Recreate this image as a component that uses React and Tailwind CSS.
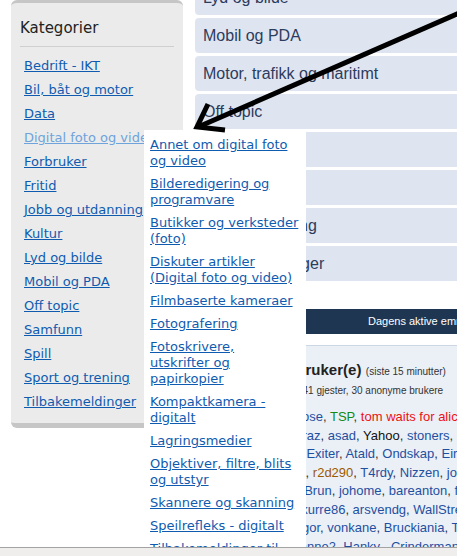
import React from "react";

const categories = [
  "Bedrift - IKT",
  "Bil, båt og motor",
  "Data",
  "Digital foto og video",
  "Forbruker",
  "Fritid",
  "Jobb og utdanning",
  "Kultur",
  "Lyd og bilde",
  "Mobil og PDA",
  "Off topic",
  "Samfunn",
  "Spill",
  "Sport og trening",
  "Tilbakemeldinger",
];

// linjeskift som i originalen
const subCategories = [
  ["Annet om digital foto", "og video"],
  ["Bilderedigering og", "programvare"],
  ["Butikker og verksteder", "(foto)"],
  ["Diskuter artikler", "(Digital foto og video)"],
  ["Filmbaserte kameraer"],
  ["Fotografering"],
  ["Fotoskrivere,", "utskrifter og", "papirkopier"],
  ["Kompaktkamera -", "digitalt"],
  ["Lagringsmedier"],
  ["Objektiver, filtre, blits", "og utstyr"],
  ["Skannere og skanning"],
  ["Speilrefleks - digitalt"],
  ["Tilbakemeldinger til", "Digital foto og video"],
];

const forums = [
  "Lyd og bilde",
  "Mobil og PDA",
  "Motor, trafikk og maritimt",
  "Off topic",
  "Samfunn",
  "Spill",
  "Sport og trening",
  "Tilbakemeldinger",
];

// b = blå, g = grønn, r = rød, k = svart, o = brun
const userLines = [
  [["Espen", "b"], ["Harald", "b"], ["Rose", "b"], ["TSP", "g"], ["tom waits for alice", "r"]],
  [["Morten", "b"], ["Olav", "b"], ["Shiraz", "b"], ["asad", "b"], ["Yahoo", "k"], ["stoners", "b"], ["Bob", "b"]],
  [["Lasse", "b"], ["Bentsens", "b"], ["Exiter", "b"], ["Atald", "b"], ["Ondskap", "b"], ["Eirik", "b"]],
  [["Kjetil", "b"], ["Strømsman", "b"], ["r2d290", "o"], ["T4rdy", "b"], ["Nizzen", "b"], ["jonas", "b"]],
  [["Toren", "b"], ["Geir", "b"], ["Knut Brun", "b"], ["johome", "b"], ["bareanton", "b"], ["frode", "b"]],
  [["Henrik", "b"], ["Bjarne", "b"], ["Skurre86", "b"], ["arsvendg", "b"], ["WallStreet", "b"]],
  [["Stian", "b"], ["Trond", "b"], ["Gregor", "b"], ["vonkane", "b"], ["Bruckiania", "b"], ["Tom", "b"]],
  [["Espen", "b"], ["Arnold", "b"], ["Sanne2", "b"], ["Hanky ", "b"], ["Crinderman", "b"]],
];

const userColors = {
  b: "text-[#1f4fa0]",
  g: "text-[#138a13]",
  r: "text-[#ee1111]",
  k: "text-[#111111]",
  o: "text-[#9a5a00]",
};

const App = () => {
  return (
    <div className="relative w-[457px] h-[556px] overflow-hidden bg-white">
      <div className="flex items-start">
        {/* Kategorier */}
        <div className="ml-[11px] w-[172px] shrink-0 rounded-md border-t-[3px] border-b-[5px] border-[#c6c6c6] bg-[#ebebeb] px-[9px] pt-[15px] pb-[9px] font-['DejaVu_Sans',Verdana,sans-serif]">
          <h2 className="text-[15px] leading-[20px] text-[#222]">Kategorier</h2>
          <hr className="mt-[8px] border-t border-[#cfcfcf]" />
          <ul className="mt-[7px] pl-1">
            {categories.map((cat) => (
              <li key={cat} className="text-[13px] leading-[24px] whitespace-nowrap">
                <a
                  href="#"
                  className={
                    cat === "Digital foto og video"
                      ? "underline text-[#6ea3dc]"
                      : "underline text-[#0f5bb0]"
                  }
                >
                  {cat}
                </a>
              </li>
            ))}
          </ul>
        </div>

        {/* Forum-liste */}
        <div className="ml-[12px] w-[300px] shrink-0 -mt-[20px] font-['Liberation_Sans',Arial,sans-serif]">
          <div className="flex flex-col gap-[3px]">
            {forums.map((f) => (
              <div
                key={f}
                className="h-[35px] rounded-[4px] bg-[#dfe5f0] pl-2 flex items-center text-[16px] text-[#2c3c5e]"
              >
                {f}
              </div>
            ))}
          </div>

          <div className="mt-[28px] h-[25px] bg-[#1e3651] flex items-center pl-[173px] text-[11px] text-white whitespace-nowrap">
            Dagens aktive emner
          </div>

          <div className="mt-[11px] border-t border-[#cdd6e3] bg-[#ebf0f7] px-2 pt-[14px] pb-4 whitespace-nowrap">
            <div className="leading-[20px] text-[#222]">
              <span className="text-[15px] font-bold">Pålogget: 71 bruker(e)</span>{" "}
              <span className="text-[10px] text-[#333]">(siste 15 minutter)</span>
            </div>
            <div className="text-[10px] leading-[18px] text-[#333]">
              Totalt: 200 registrerte, 41 gjester, 30 anonyme brukere
            </div>
            <div className="mt-[8px] text-[13px] leading-[18.5px]">
              {userLines.map((line, i) => (
                <div key={i}>
                  {line.map(([name, c], j) => (
                    <span key={j}>
                      <span className={userColors[c]}>{name}</span>
                      <span className="text-[#333]">{", "}</span>
                    </span>
                  ))}
                </div>
              ))}
            </div>
          </div>
        </div>
      </div>

      {/* Undermeny */}
      <div className="absolute left-[144px] top-[130px] w-[162px] h-[440px] bg-white px-[6px] pt-[7px] font-['DejaVu_Sans',Verdana,sans-serif]">
        <ul className="flex flex-col gap-[7px]">
          {subCategories.map((lines) => (
            <li key={lines.join(" ")} className="text-[13px] leading-[16px] whitespace-nowrap">
              <a href="#" className="underline text-[#0f5bb0]">
                {lines.map((l, i) => (
                  <React.Fragment key={i}>
                    {i > 0 && <br />}
                    {l}
                  </React.Fragment>
                ))}
              </a>
            </li>
          ))}
        </ul>
      </div>

      {/* Pil */}
      <svg
        className="absolute left-0 top-0 pointer-events-none"
        width="457"
        height="556"
        viewBox="0 0 457 556"
      >
        <line x1="198" y1="127" x2="466" y2="10" stroke="#000" strokeWidth="5" />
        <polyline
          points="208,104 197,127 225,130"
          fill="none"
          stroke="#000"
          strokeWidth="5"
          strokeLinejoin="miter"
        />
      </svg>

      {/* Statuslinje */}
      <div className="absolute left-0 right-0 bottom-0 h-[9px] border-t border-[#a3a3a3] bg-[#f0eeec]" />
    </div>
  );
};

export default App;
